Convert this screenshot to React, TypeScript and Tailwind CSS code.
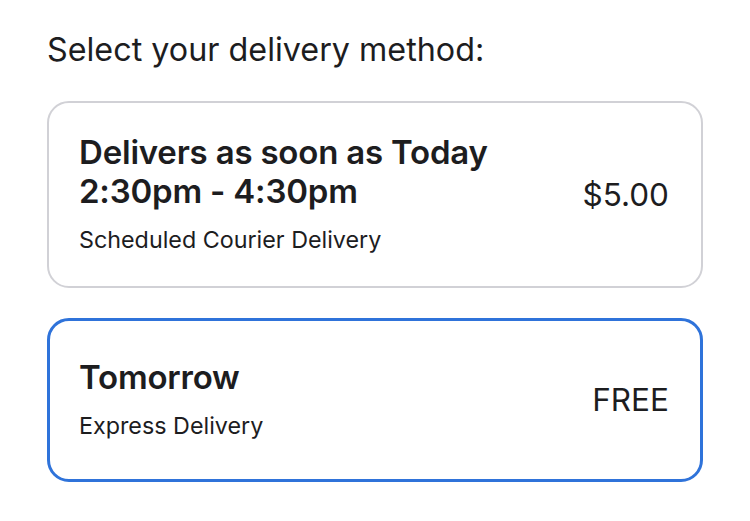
import React from 'react'

interface DeliveryOption {
  id: string
  title: string[]
  subtitle: string
  price: string
}

const options: DeliveryOption[] = [
  {
    id: 'courier',
    title: ['Delivers as soon as Today', '2:30pm - 4:30pm'],
    subtitle: 'Scheduled Courier Delivery',
    price: '$5.00',
  },
  {
    id: 'express',
    title: ['Tomorrow'],
    subtitle: 'Express Delivery',
    price: 'FREE',
  },
]

function OptionCard({ option, selected }: { option: DeliveryOption; selected: boolean }) {
  return (
    <div
      className={`flex items-center justify-between min-h-[164px] rounded-[22px] py-[30px] ${
        selected ? 'border-[3px] border-[#2f73da] pl-[29px] pr-[31px]' : 'border-2 border-[#d1d1d6] pl-[30px] pr-[32px]'
      }`}
    >
      <div className="flex flex-col">
        <div className="text-[33px] leading-[39px] font-semibold text-[#1d1d1f] tracking-[-0.2px]">
          {option.title.map((line) => (
            <div key={line}>{line}</div>
          ))}
        </div>
        <div className="mt-[13px] text-[23.3px] leading-[32px] text-[#1d1d1f]">{option.subtitle}</div>
      </div>
      <div className="text-[31.5px] leading-[40px] text-[#1d1d1f]">{option.price}</div>
    </div>
  )
}

export default function App() {
  return (
    <div
      className="w-[750px] h-[521px] bg-white px-[47px] pt-[30px]"
      style={{ fontFamily: 'Inter, "Noto Sans", sans-serif' }}
    >
      <h1 className="text-[32.3px] leading-[40px] font-normal text-[#1d1d1f]">Select your delivery method:</h1>
      <div className="mt-[31px] flex flex-col gap-[30px]">
        {options.map((o) => (
          <OptionCard key={o.id} option={o} selected={o.id === 'express'} />
        ))}
      </div>
    </div>
  )
}
